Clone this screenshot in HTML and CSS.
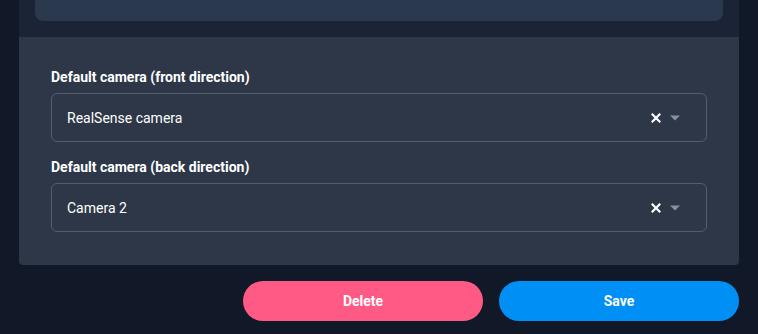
FILE: index.html
```html
<!DOCTYPE html>
<html>
<head>
<meta charset="utf-8">
<link rel="stylesheet" href="styles.css">
</head>
<body>
<div class="page">
  <div class="top">
    <div class="card"></div>
  </div>
  <div class="form">
    <div class="field">
      <label class="label">Default camera (front direction)</label>
      <div class="select">
        <span class="value">RealSense camera</span>
        <span class="icons">
          <svg class="clear" width="10" height="10" viewBox="0 0 10 10"><path d="M1.5 1.5 L8.5 8.5 M8.5 1.5 L1.5 8.5" stroke="#fff" stroke-width="2.2" stroke-linecap="square"/></svg>
          <svg class="caret" width="10" height="6" viewBox="0 0 10 6"><path d="M0 0.5 L10 0.5 L5 5.5 Z" fill="#8a8f98"/></svg>
        </span>
      </div>
    </div>
    <div class="field second">
      <label class="label">Default camera (back direction)</label>
      <div class="select">
        <span class="value">Camera 2</span>
        <span class="icons">
          <svg class="clear" width="10" height="10" viewBox="0 0 10 10"><path d="M1.5 1.5 L8.5 8.5 M8.5 1.5 L1.5 8.5" stroke="#fff" stroke-width="2.2" stroke-linecap="square"/></svg>
          <svg class="caret" width="10" height="6" viewBox="0 0 10 6"><path d="M0 0.5 L10 0.5 L5 5.5 Z" fill="#8a8f98"/></svg>
        </span>
      </div>
    </div>
  </div>
  <div class="actions">
    <button class="btn delete">Delete</button>
    <button class="btn save">Save</button>
  </div>
</div>
</body>
</html>
```

FILE: styles.css
```css
html, body {
  margin: 0;
  padding: 0;
  background: #111827;
  font-family: Roboto, "Liberation Sans", sans-serif;
  color: #fff;
}
.page {
  padding: 0 19px;
}
.top {
  background: #1a2436;
  padding: 0 16px 16px;
}
.card {
  height: 21px;
  background: #2a394e;
  border-radius: 0 0 8px 8px;
}
.form {
  background: #2d3748;
  padding: 32px 32px 33px;
  border-radius: 0 0 4px 4px;
}
.field {
  display: flex;
  flex-direction: column;
}
.field.second {
  margin-top: 17px;
}
.label {
  font-size: 14px;
  font-weight: 700;
  line-height: 16px;
  margin-bottom: 8px;
  color: #fff;
}
.select {
  height: 47px;
  border: 1px solid #515d70;
  border-radius: 6px;
  display: flex;
  align-items: center;
  justify-content: space-between;
  padding: 0 26px 0 15px;
}
.value {
  font-size: 14px;
  color: #fff;
}
.icons {
  display: flex;
  align-items: center;
  gap: 9px;
}
.caret {
  margin-top: 1px;
}
.actions {
  display: flex;
  justify-content: flex-end;
  gap: 16px;
  margin-top: 16px;
}
.btn {
  width: 240px;
  height: 40px;
  border: none;
  border-radius: 20px;
  color: #fff;
  font-family: Roboto, "Liberation Sans", sans-serif;
  font-size: 14px;
  font-weight: 700;
  padding: 0;
}
.delete {
  background: #ff5a85;
}
.save {
  background: #008ff5;
}
```
